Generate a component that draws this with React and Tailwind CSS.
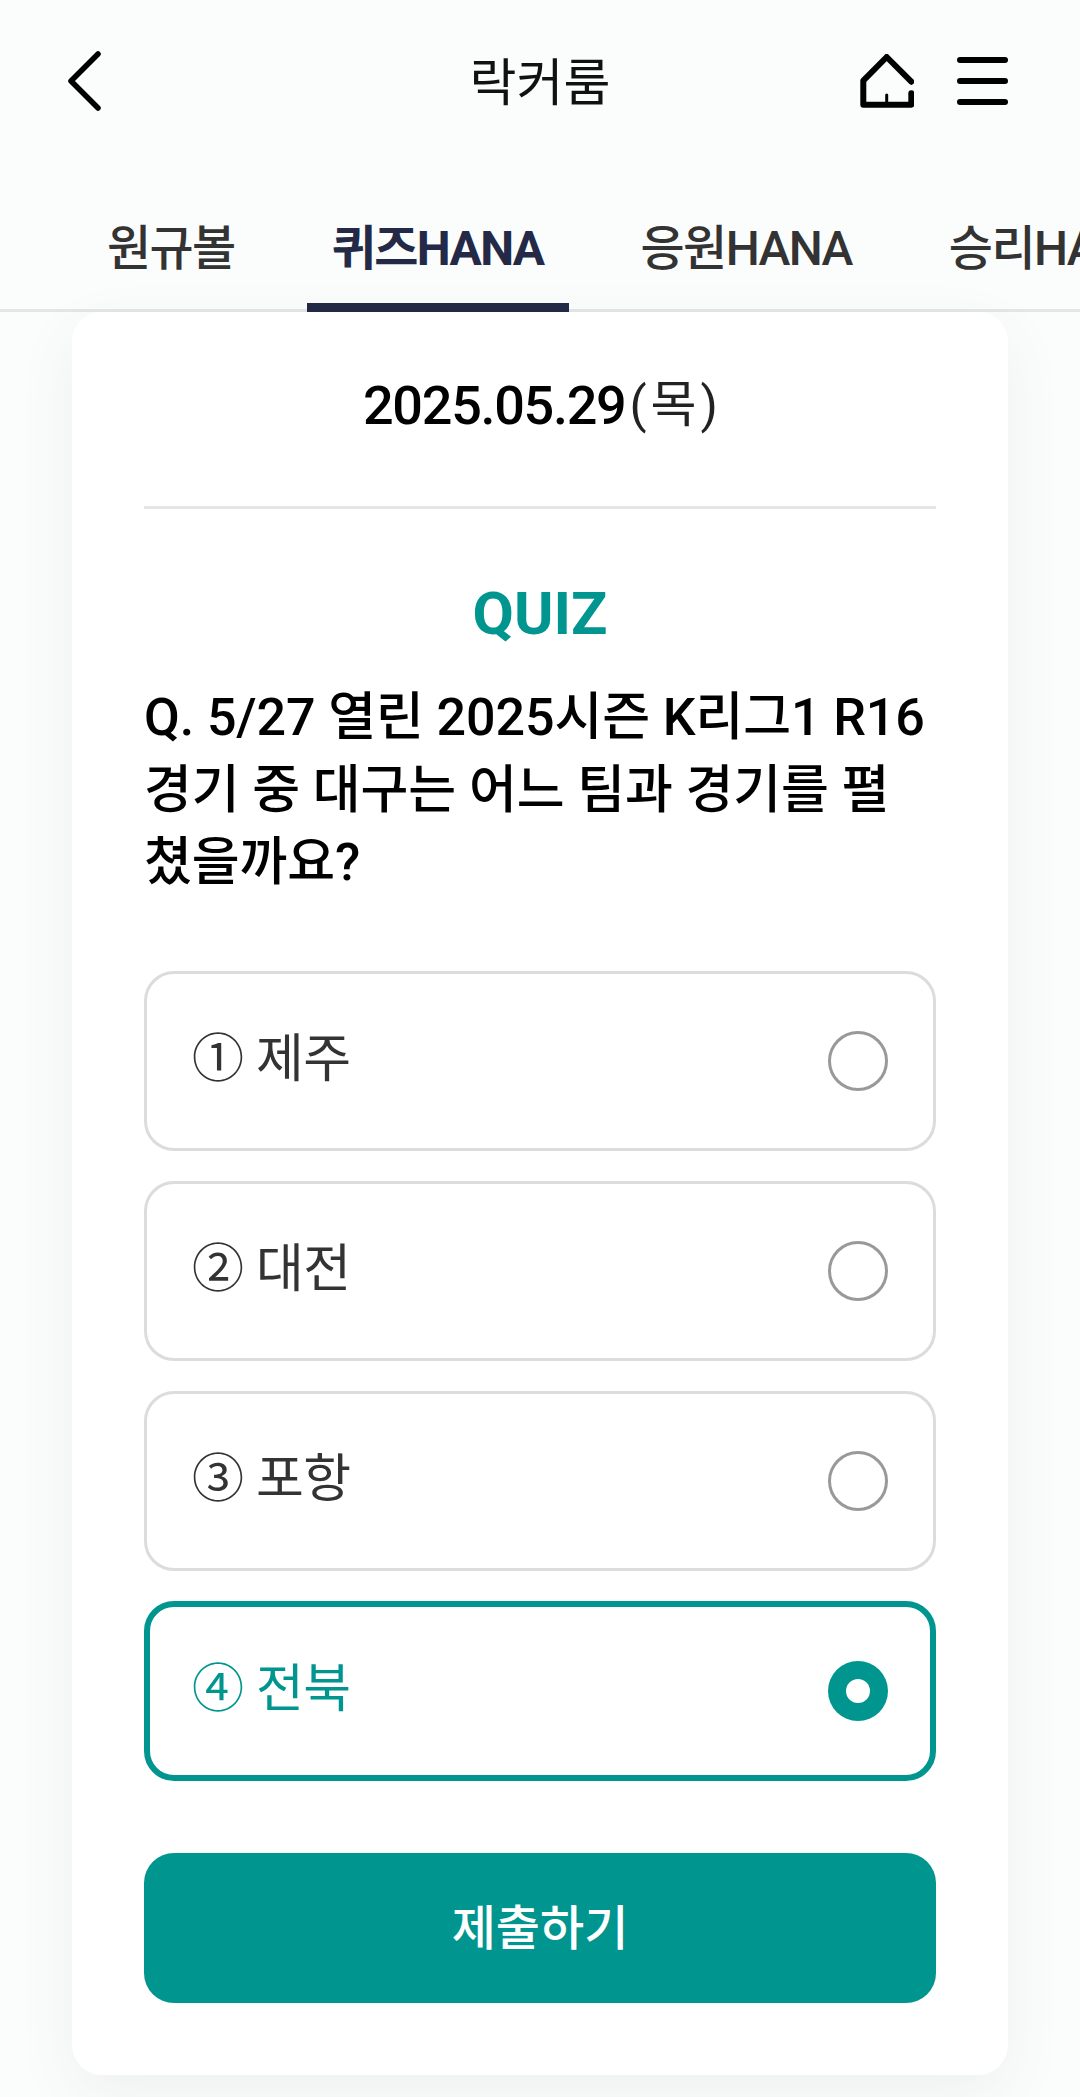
import { useState } from "react";

const FONT = "font-['Roboto','Noto_Sans_CJK_KR',sans-serif]";

const tabs = ["원규볼", "퀴즈HANA", "응원HANA", "승리HANA"];
const options = [
    { id: 1, label: "① 제주" },
    { id: 2, label: "② 대전" },
    { id: 3, label: "③ 포항" },
    { id: 4, label: "④ 전북" },
];

export default function App() {
    const [selected, setSelected] = useState(4);

    return (
        <div className={`${FONT} flex flex-col h-[2097px] overflow-hidden bg-[#fbfdfc]`}>
            {/* Header */}
            <div className="flex items-center justify-between h-[162px] pl-[66px] pr-[72px] shrink-0">
                <svg width="36" height="60" viewBox="0 0 36 60" fill="none" className="-mt-[1px]">
                    <path d="M32 3 L5 30 L32 57" stroke="#000" strokeWidth="5.5" strokeLinecap="round" strokeLinejoin="round" />
                </svg>
                <h1 className="absolute left-0 right-0 text-center text-[51px] leading-none text-[#111] mt-[4px] pointer-events-none">락커룸</h1>
                <div className="flex items-center gap-[43px]">
                    <svg width="54" height="54" viewBox="0 0 54 54" fill="none">
                        <path d="M51.3 27.7 L26.7 3 L3.3 26.7 V50.7 H51.3 V39.3" stroke="#000" strokeWidth="6" strokeLinecap="round" strokeLinejoin="round" />
                        <path d="M26.7 41 V50" stroke="#000" strokeWidth="3" strokeLinecap="round" />
                    </svg>
                    <div className="flex flex-col gap-[15px]">
                        <div className="w-[51px] h-[6px] rounded-full bg-black" />
                        <div className="w-[51px] h-[6px] rounded-full bg-black" />
                        <div className="w-[51px] h-[6px] rounded-full bg-black" />
                    </div>
                </div>
            </div>

            {/* Tabs */}
            <div className="flex gap-[47px] h-[150px] pl-[82px] shrink-0 border-b-[3px] border-[#e5e5e5] whitespace-nowrap">
                {tabs.map((tab, i) => (
                    <div
                        key={tab}
                        className={`flex items-center h-[150px] px-[25px] text-[48px] tracking-[-1.6px] shrink-0 border-b-[9px] pt-[33px] ${i === 1
                                ? "font-bold text-[#232946] border-[#232946]"
                                : "font-medium text-[#333] border-transparent"
                            }`}
                    >
                        {tab}
                    </div>
                ))}
            </div>

            {/* Card */}
            <div className="mx-[72px] flex flex-col h-[1763px] shrink-0 px-[72px] rounded-[30px] bg-white shadow-[0_20px_60px_rgba(60,80,80,0.07)]">
                <div className="flex items-center justify-center h-[197px] pb-[8px] pl-[5px] border-b-[3px] border-[#e5e5e5] shrink-0">
                    <span className="text-[54px] font-medium text-black tracking-[-1.3px]">2025.05.29</span>
                    <span className="text-[50px] text-[#222] ml-[4px] tracking-[4px]">(목)</span>
                </div>

                <p className="mt-[69px] text-center text-[60px] leading-[72px] font-bold text-[#00968f]">QUIZ</p>
                <p className="mt-[32px] text-[52px] leading-[72.5px] font-medium text-black tracking-[-0.1px]">
                    Q. 5/27 열린 2025시즌 K리그1 R16 경기 중 대구는 어느 팀과 경기를 펼<br />쳤을까요?
                </p>

                {/* Options */}
                <div className="mt-[71px] flex flex-col gap-[30px]">
                    {options.map((option) => {
                        const active = selected === option.id;
                        return (
                            <button
                                key={option.id}
                                onClick={() => setSelected(option.id)}
                                className={`flex items-center justify-between h-[180px] rounded-[30px] bg-white ${active
                                        ? "border-[6px] border-[#00968f] text-[#00968f] pl-[42px] pr-[42px]"
                                        : "border-[3px] border-[#dcdcdc] text-[#333] pl-[45px] pr-[45px]"
                                    }`}
                            >
                                <span className="text-[52px] leading-none -mt-[1px] tracking-[-0.5px]">{option.label}</span>
                                {active ? (
                                    <span className="flex items-center justify-center w-[60px] h-[60px] rounded-full bg-[#00968f]">
                                        <span className="w-[24px] h-[24px] rounded-full bg-white" />
                                    </span>
                                ) : (
                                    <span className="w-[60px] h-[60px] rounded-full border-[3px] border-[#999]" />
                                )}
                            </button>
                        );
                    })}
                </div>

                <button className="mt-[72px] h-[150px] pt-[2px] rounded-[30px] bg-[#00968f] text-white text-[48px] font-medium">
                    제출하기
                </button>
            </div>
        </div>
    );
}
